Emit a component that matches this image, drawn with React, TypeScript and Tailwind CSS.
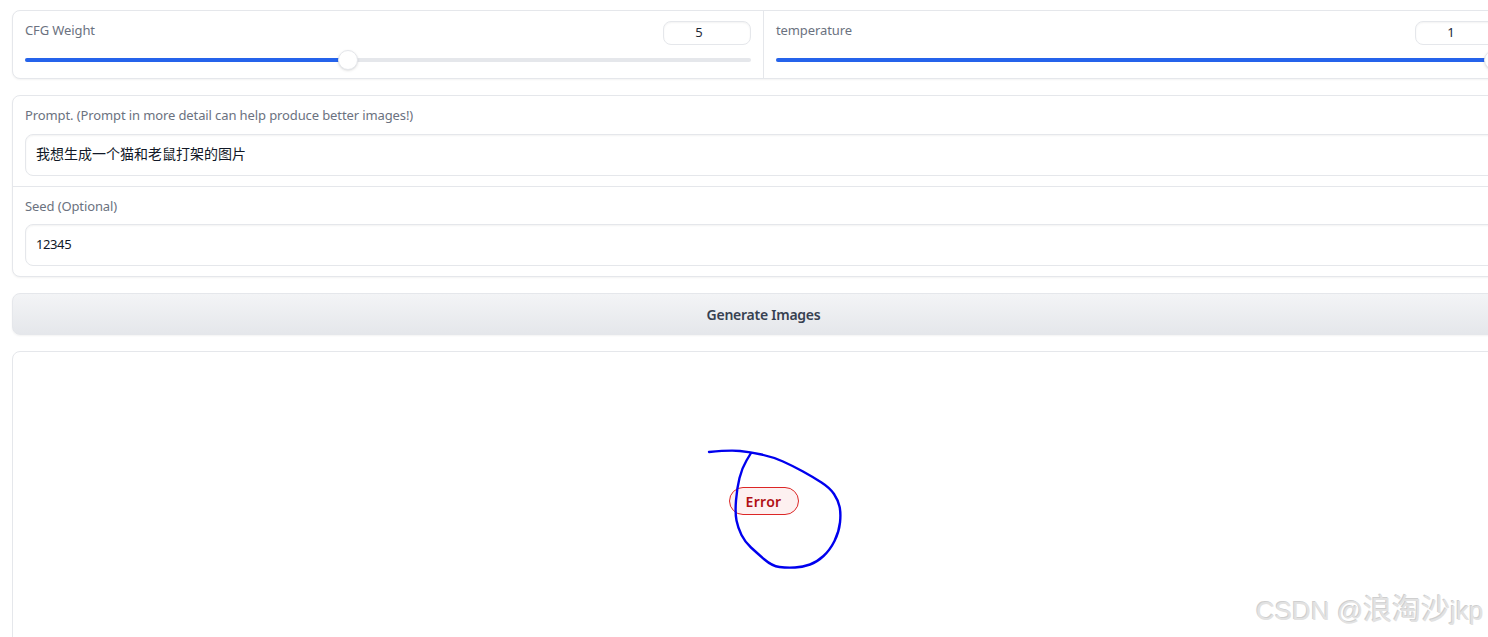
const labelClass = 'text-[13px] leading-[18px] tracking-[-0.11px] text-[#6b7280]';
const inputClass = 'flex h-[42px] items-center rounded-lg border border-[#e5e7eb] bg-white px-[10px] text-[#111827] shadow-[inset_0_1px_2px_rgba(0,0,0,0.05)]';

// points traced from the hand-drawn circle
const circlePoints = [
  [709, 452], [730, 450], [750, 452], [773, 457], [793, 466], [813, 477], [830, 488], [838, 500], [841, 513],
  [839, 532], [830, 550], [817, 562], [803, 567], [787, 568], [772, 566], [757, 553], [745, 542], [738, 528],
  [735, 513], [737, 488], [742, 468], [751, 453],
];

const circlePath = circlePoints.reduce((d, [x, y], i) => {
  if (i === 0) return `M${x} ${y}`;
  const next = circlePoints[i + 1];
  if (!next) return `${d} L${x} ${y}`;
  return `${d} Q${x} ${y} ${(x + next[0]) / 2} ${(y + next[1]) / 2}`;
}, '');

const SliderBlock = ({ label, value, percent, className }: { label: string; value: string; percent: number; className: string }) => (
  <div className={`flex h-[67px] flex-col px-3 pt-[10px] ${className}`}>
    <div className="flex items-start justify-between">
      <span className={labelClass}>{label}</span>
      <div className="flex h-6 w-[88px] items-center justify-center rounded-lg border border-[#e5e7eb] bg-white pr-4 text-[13px] text-[#1f2937] shadow-[inset_0_1px_2px_rgba(0,0,0,0.05)]">
        {value}
      </div>
    </div>
    <div className="relative mt-[13px] h-1 rounded-full bg-[#e5e7eb]">
      <div className="h-1 rounded-full bg-[#2563eb]" style={{ width: `${percent}%` }} />
      <div
        className="absolute top-[-8px] ml-[-10px] h-5 w-5 rounded-full border border-[#e5e7eb] bg-white shadow-sm"
        style={{ left: `${percent}%` }}
      />
    </div>
  </div>
);

export default function App() {
  return (
    <div
      className="relative h-[637px] w-[1488px] overflow-hidden bg-white"
      style={{ fontFamily: '"Noto Sans", "Noto Sans CJK SC", sans-serif' }}
    >
      <div className="flex w-[1516px] flex-col gap-4 pl-3 pt-[10px]">
        {/* Sliders */}
        <div className="flex divide-x divide-[#e5e7eb] rounded-lg border border-[#e5e7eb] bg-white shadow-[0_1px_2px_rgba(0,0,0,0.05)]">
          <SliderBlock label="CFG Weight" value="5" percent={44.5} className="w-[751px]" />
          <SliderBlock label="temperature" value="1" percent={98.7} className="flex-1" />
        </div>

        {/* Prompt and seed */}
        <div className="flex flex-col divide-y divide-[#e5e7eb] rounded-lg border border-[#e5e7eb] bg-white shadow-[0_1px_2px_rgba(0,0,0,0.05)]">
          <div className="flex h-[91px] flex-col gap-[10px] px-3 pt-[10px]">
            <span className={labelClass}>Prompt. (Prompt in more detail can help produce better images!)</span>
            <div className={`${inputClass} pb-1 text-[14px]`}>我想生成一个猫和老鼠打架的图片</div>
          </div>
          <div className="flex h-[89px] flex-col gap-[9px] px-3 pt-[10px]">
            <span className={labelClass}>Seed (Optional)</span>
            <div className={`${inputClass} text-[13px] tracking-[-0.4px]`}>12345</div>
          </div>
        </div>

        {/* Generate button */}
        <button className="mr-[1px] h-[42px] rounded-lg border border-[#e5e7eb] bg-gradient-to-b from-[#f3f4f6] to-[#e5e7eb] pt-[2px] text-sm font-semibold tracking-[-0.25px] text-[#374151] shadow-[0_1px_2px_rgba(0,0,0,0.05)]">
          Generate Images
        </button>

        {/* Output panel */}
        <div className="relative mr-[1px] flex h-[400px] justify-center rounded-lg border border-[#e5e7eb] bg-white pt-[135px]">
          <div className="flex h-7 w-[70px] items-center justify-center rounded-full border border-[#dc2626] bg-[#fdf0f0] pt-[1px] text-sm font-semibold tracking-[0.3px] text-[#b00f14]">
            Error
          </div>
          {/* Hand-drawn annotation */}
          <svg className="absolute left-[677px] top-[83px]" width="170" height="145" viewBox="690 435 170 145" fill="none">
            <path d={circlePath} stroke="#0000ee" strokeWidth="2.4" strokeLinecap="round" strokeLinejoin="round" />
          </svg>
        </div>
      </div>

      {/* CSDN watermark */}
      <div
        className="pointer-events-none absolute left-[1256px] top-[592px] whitespace-nowrap text-[26px] leading-[36px] text-[#e2e2e2] [text-shadow:-1px_-1px_0_#cfcfcf]"
        style={{ fontFamily: '"Liberation Sans", "Noto Sans CJK SC", sans-serif' }}
      >
        CSDN @<span className="text-[29px]">浪淘沙</span>jkp
      </div>
    </div>
  );
}
